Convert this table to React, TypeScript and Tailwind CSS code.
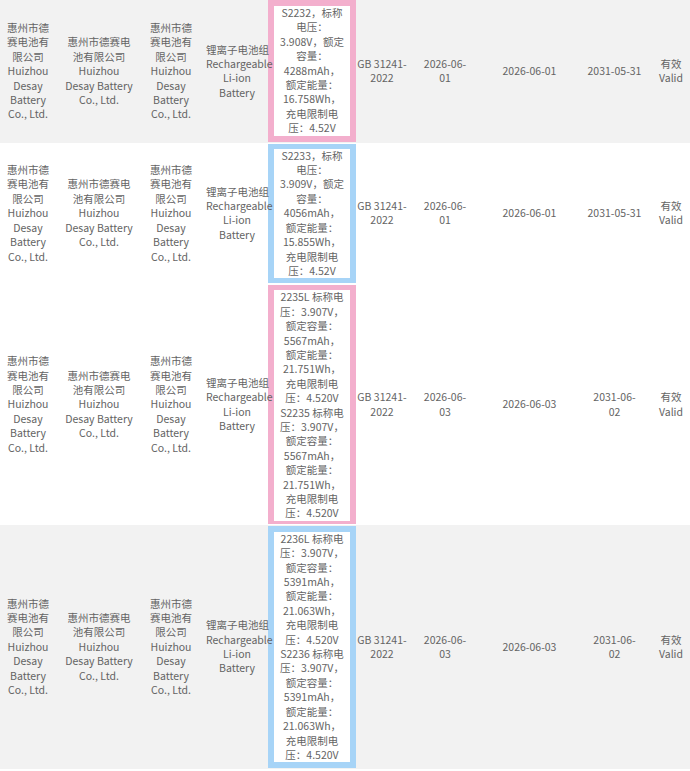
type Row = {
    bg: string
    box: string
    cellPad: string
    spec: string[]
    std: string[]
    issue: string[]
    start: string[]
    end: string[]
}

const maker = ["惠州市德", "赛电池有", "限公司", "Huizhou", "Desay", "Battery", "Co., Ltd."]
const maker2 = ["惠州市德赛电", "池有限公司", "Huizhou", "Desay Battery", "Co., Ltd."]
const product = ["锂离子电池组", "Rechargeable", "Li-ion", "Battery"]

const spec9 = (model: string, v: string, cap: string, wh: string) => [
    `${model}，标称`,
    "电压：",
    `${v}，额定`,
    "容量：",
    `${cap}，`,
    "额定能量：",
    `${wh}，`,
    "充电限制电",
    "压：4.52V",
]

const spec16 = (a: string, b: string, cap: string, wh: string) => {
    const part = (m: string) => [
        `${m} 标称电`,
        "压：3.907V，",
        "额定容量：",
        `${cap}，`,
        "额定能量：",
        `${wh}，`,
        "充电限制电",
        "压：4.520V",
    ]
    return [...part(a), ...part(b)]
}

const rows: Row[] = [
    {
        bg: "bg-[#f2f2f2]",
        box: "border-[6px] border-[#f3afcd]",
        cellPad: "pt-0 pb-[1px]",
        spec: spec9("S2232", "3.908V", "4288mAh", "16.758Wh"),
        std: ["GB 31241-", "2022"],
        issue: ["2026-06-", "01"],
        start: ["2026-06-01"],
        end: ["2031-05-31"],
    },
    {
        bg: "bg-white",
        box: "border-x-[6px] border-y-[5px] border-[#a7d4f7]",
        cellPad: "py-[1px]",
        spec: spec9("S2233", "3.909V", "4056mAh", "15.855Wh"),
        std: ["GB 31241-", "2022"],
        issue: ["2026-06-", "01"],
        start: ["2026-06-01"],
        end: ["2031-05-31"],
    },
    {
        bg: "bg-white",
        box: "border-x-[6px] border-t-[5px] border-b-[3px] border-[#f3afcd]",
        cellPad: "py-[1px]",
        spec: spec16("2235L", "S2235", "5567mAh", "21.751Wh"),
        std: ["GB 31241-", "2022"],
        issue: ["2026-06-", "03"],
        start: ["2026-06-03"],
        end: ["2031-06-", "02"],
    },
    {
        bg: "bg-[#f2f2f2]",
        box: "border-[6px] border-[#a7d4f7]",
        cellPad: "py-[1px]",
        spec: spec16("2236L", "S2236", "5391mAh", "21.063Wh"),
        std: ["GB 31241-", "2022"],
        issue: ["2026-06-", "03"],
        start: ["2026-06-03"],
        end: ["2031-06-", "02"],
    },
]

function Lines({ lines }: { lines: string[] }) {
    return (
        <>
            {lines.map((l, i) => (
                <div key={i} className="whitespace-nowrap">
                    {l}
                </div>
            ))}
        </>
    )
}

export default function App() {
    return (
        <div
            className="w-[690px] h-[771px] overflow-hidden bg-white text-[#646464] text-[10.5px] leading-[14.4px]"
            style={{ fontFamily: '"Noto Sans CJK SC", "Noto Sans", sans-serif' }}
        >
            <table className="table-fixed border-collapse w-[690px]">
                <colgroup>
                    <col className="w-[56px]" />
                    <col className="w-[86px]" />
                    <col className="w-[58px]" />
                    <col className="w-[68px]" />
                    <col className="w-[88px]" />
                    <col className="w-[52px]" />
                    <col className="w-[74px]" />
                    <col className="w-[95px]" />
                    <col className="w-[75px]" />
                    <col className="w-[38px]" />
                </colgroup>
                <tbody>
                    {rows.map((r, i) => (
                        <tr key={i} className={r.bg}>
                            <td className="p-0 text-center align-middle">
                                <Lines lines={maker} />
                            </td>
                            <td className="p-0 text-center align-middle">
                                <Lines lines={maker2} />
                            </td>
                            <td className="p-0 text-center align-middle">
                                <Lines lines={maker} />
                            </td>
                            <td className="p-0 pl-[6px] text-center align-middle">
                                <Lines lines={product} />
                            </td>
                            <td className={`px-0 ${r.cellPad} text-center align-middle`}>
                                <div className={`bg-white ${r.box}`}>
                                    <Lines lines={r.spec} />
                                </div>
                            </td>
                            <td className="p-0 text-center align-middle">
                                <Lines lines={r.std} />
                            </td>
                            <td className="p-0 text-center align-middle">
                                <Lines lines={r.issue} />
                            </td>
                            <td className="p-0 text-center align-middle">
                                <Lines lines={r.start} />
                            </td>
                            <td className="p-0 text-center align-middle">
                                <Lines lines={r.end} />
                            </td>
                            <td className="p-0 text-center align-middle">
                                <Lines lines={["有效", "Valid"]} />
                            </td>
                        </tr>
                    ))}
                </tbody>
            </table>
        </div>
    )
}
